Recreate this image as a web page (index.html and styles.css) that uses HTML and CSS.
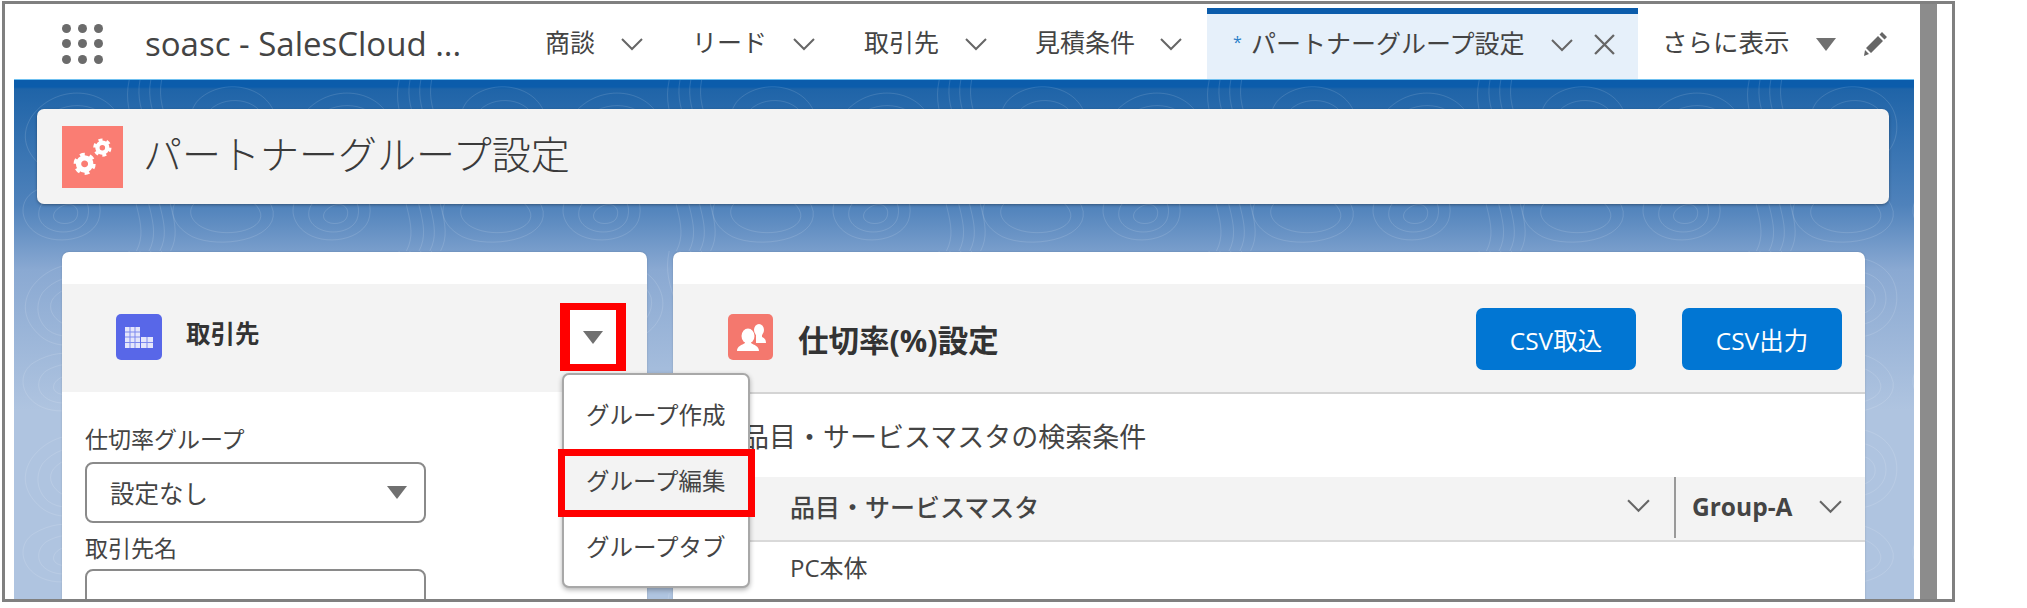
FILE: index.html
```html
<!DOCTYPE html>
<html lang="ja">
<head>
<meta charset="utf-8">
<title>パートナーグループ設定</title>
<link rel="stylesheet" href="styles.css">
</head>
<body>
<div class="frame">
  <div class="app">
    <nav class="nav">
      <div class="launcher">
        <i></i><i></i><i></i><i></i><i></i><i></i><i></i><i></i><i></i>
      </div>
      <div class="appname">soasc - SalesCloud ...</div>
      <div class="tabs">
        <div class="tab t1"><span>商談</span><svg class="chev" viewBox="0 0 22 12"><polyline points="1,1 11,11 21,1"/></svg></div>
        <div class="tab t2"><span>リード</span><svg class="chev" viewBox="0 0 22 12"><polyline points="1,1 11,11 21,1"/></svg></div>
        <div class="tab t3"><span>取引先</span><svg class="chev" viewBox="0 0 22 12"><polyline points="1,1 11,11 21,1"/></svg></div>
        <div class="tab t4"><span>見積条件</span><svg class="chev" viewBox="0 0 22 12"><polyline points="1,1 11,11 21,1"/></svg></div>
        <div class="tab active">
          <span class="star">*</span><span>パートナーグループ設定</span>
          <svg class="chev chev-a" viewBox="0 0 22 12"><polyline points="1,1 11,11 21,1"/></svg>
          <svg class="close" viewBox="0 0 20 20"><path d="M1 1 L19 19 M19 1 L1 19"/></svg>
        </div>
        <div class="tab more"><span>さらに表示</span><span class="tri tri-more"></span>
          <svg class="pencil" viewBox="0 0 24 26"><path d="M18 1 L23 6 L20.5 8.5 L15.5 3.5 Z M14 5 L19 10 L7 22 L2 17 Z M1 19 L5 23 L0 25 Z"/></svg>
        </div>
      </div>
    </nav>
    <main class="page">
      <svg class="topo" aria-hidden="true">
        <defs>
          <pattern id="contours" width="300" height="190" patternUnits="userSpaceOnUse" patternTransform="scale(.9)">
            <g fill="none" stroke="#ffffff" stroke-opacity=".14" stroke-width="1">
              <path d="M20 40 C50 0 110 10 120 50 C130 95 60 120 30 95 C10 78 8 58 20 40Z"/>
              <path d="M32 46 C56 18 100 26 108 52 C114 86 62 106 38 88 C24 76 24 58 32 46Z"/>
              <path d="M44 52 C62 32 92 38 96 56 C100 78 66 90 50 78 C40 70 38 60 44 52Z"/>
              <path d="M56 58 C68 46 82 50 84 60 C86 70 68 76 60 70 C54 66 52 62 56 58Z"/>
              <path d="M128 0 C118 45 152 66 136 102 C124 130 152 160 136 190"/>
              <path d="M140 0 C132 40 166 66 150 102 C138 130 166 160 150 190"/>
              <path d="M152 0 C144 40 178 66 162 102 C150 130 178 160 162 190"/>
              <path d="M164 0 C156 40 190 66 174 102 C162 130 190 160 174 190"/>
              <path d="M205 22 C235 -6 292 8 292 52 C292 96 235 110 208 80 C192 62 192 36 205 22Z"/>
              <path d="M218 33 C238 14 280 22 280 53 C280 82 238 92 220 72 C208 60 208 44 218 33Z"/>
              <path d="M231 44 C244 32 268 37 268 54 C268 70 242 76 233 64 C226 58 225 50 231 44Z"/>
              <path d="M22 124 C58 102 102 116 95 152 C90 178 44 186 22 168 C6 155 6 134 22 124Z"/>
              <path d="M36 133 C62 118 88 128 82 152 C78 170 48 174 34 162 C24 154 26 140 36 133Z"/>
              <path d="M50 142 C62 134 74 140 70 152 C68 160 52 162 46 156 C42 152 44 146 50 142Z"/>
              <path d="M190 124 C218 102 280 110 288 146 C292 178 228 188 198 174 C172 160 170 138 190 124Z"/>
              <path d="M204 134 C224 120 268 126 274 148 C278 168 234 176 210 164 C194 156 192 142 204 134Z"/>
            </g>
          </pattern>
        </defs>
        <rect width="100%" height="100%" fill="url(#contours)"/>
      </svg>

      <header class="titlebar">
        <span class="title-icon">
          <svg viewBox="0 0 62 62">
            <g fill="none" stroke="#fff">
              <g transform="translate(23,38)">
                <circle r="6.2" stroke-width="5.4"/>
                <circle r="9.4" stroke-width="3.6" stroke-dasharray="4.8 5.04"/>
              </g>
              <g transform="translate(41,21.5)">
                <circle r="5" stroke-width="4.4"/>
                <circle r="7.8" stroke-width="3" stroke-dasharray="4 4.17"/>
              </g>
            </g>
          </svg>
        </span>
        <h1 class="title">パートナーグループ設定</h1>
      </header>

      <div class="columns">
        <section class="panel left">
          <div class="panel-head left-head">
            <span class="obj-icon blue">
              <svg viewBox="0 0 46 46">
                <path class="fillw" d="M9 13 H24 V34 H9 Z M25 23 H37 V34 H25 Z"/>
                <path class="cells" d="M14 13 V34 M19 13 V34 M9 18 H24 M9 23 H24 M9 28.500 H24 M31 23 V34 M25 28.500 H37"/>
              </svg>
            </span>
            <h2 class="left-title">取引先</h2>
          </div>
          <div class="form">
            <label class="lbl">仕切率グループ</label>
            <div class="select"><span>設定なし</span><span class="tri"></span></div>
            <label class="lbl lbl2">取引先名</label>
            <div class="input"></div>
          </div>
        </section>

        <section class="panel right">
          <div class="panel-head right-head">
            <span class="obj-icon coral">
              <svg viewBox="0 0 45 46">
                <ellipse class="fillw" cx="31" cy="16" rx="5" ry="6"/>
                <path class="fillw" d="M28 20 H34 V23 C36 24 38 25 38 29 H28 Z"/>
                <ellipse class="fillw" cx="20" cy="22" rx="6.500" ry="7.500"/>
                <path class="fillw" d="M9 37 C9 32 14 31 17 29 V26 H23 V29 C26 31 31 32 31 37 Z"/>
              </svg>
            </span>
            <h2 class="right-title">仕切率(%)設定</h2>
            <div class="btns">
              <button class="btn">CSV取込</button>
              <button class="btn">CSV出力</button>
            </div>
          </div>
          <p class="criteria">品目・サービスマスタの検索条件</p>
          <div class="thead">
            <div class="th th-main"><span>品目・サービスマスタ</span><svg class="chev chev-th" viewBox="0 0 22 12"><polyline points="1,1 11,11 21,1"/></svg></div>
            <div class="th th-group"><span>Group-A</span><svg class="chev chev-th" viewBox="0 0 22 12"><polyline points="1,1 11,11 21,1"/></svg></div>
          </div>
          <div class="trow">PC本体</div>
        </section>
      </div>

      <div class="mark mark-btn"><span class="tri"></span></div>
      <div class="menu">
        <div class="menu-item">グループ作成</div>
        <div class="menu-item hl">グループ編集</div>
        <div class="menu-item">グループタブ</div>
      </div>
      <div class="mark mark-item"></div>
    </main>
  </div>
  <div class="gutter"></div>
  <div class="scrollbar"></div>
</div>
</body>
</html>
```
FILE: styles.css
```css
* { box-sizing: border-box; }
html, body { margin: 0; padding: 0; background: #fff; }
body {
  font-family: "Open Sans", "Noto Sans CJK JP", sans-serif;
  color: #444;
  height: 608px;
  overflow: hidden;
}
h1, h2, p { margin: 0; font-weight: 400; }

.frame {
  margin: 1px 0 0 2px;
  width: 1953px;
  height: 601px;
  border: 3px solid #808080;
  display: flex;
  overflow: hidden;
  background: #fff;
}
.app {
  margin-left: 9px;
  width: 1900px;
  flex: none;
  display: flex;
  flex-direction: column;
}
.gutter { width: 6px; flex: none; }
.scrollbar { width: 17px; flex: none; background: #8c8c8c; }

/* nav */
.nav {
  height: 75px;
  flex: none;
  background: #fff;
  display: flex;
  align-items: center;
  padding-left: 48px;
}
.launcher {
  width: 41px;
  height: 40px;
  display: grid;
  grid-template-columns: repeat(3, 9px);
  grid-auto-rows: 9px;
  justify-content: space-between;
  align-content: space-between;
  flex: none;
  margin-top: 4px;
}
.launcher i { background: #6b6b6b; border-radius: 50%; }
.appname {
  margin-left: 42px;
  font-size: 33px;
  width: 320px;
  flex: none;
  white-space: nowrap;
  color: #444;
  margin-top: 4px;
}
.tabs { display: flex; align-items: stretch; height: 100%; margin-left: 56px; }
.tab {
  display: flex;
  align-items: center;
  font-size: 25px;
  white-space: nowrap;
  padding: 0 0 0 24px;
  flex: none;
  color: #444;
}
.tab > span { line-height: 1; margin-top: 2px; }
.tab .chev { margin-top: 4px; }
.t1 { width: 147px; }
.t2 { width: 172px; }
.t3 { width: 171px; }
.t4 { width: 196px; }
.t1 .chev { margin-left: 26px; }
.t2 .chev { margin-left: 26px; }
.t3 .chev { margin-left: 26px; }
.t4 .chev { margin-left: 25px; }
.chev { width: 22px; height: 12px; flex: none; overflow: visible; }
.chev polyline { fill: none; stroke: #666; stroke-width: 2; }
.active {
  width: 431px;
  padding: 0 0 8px 26px;
  background: #e6f0fa;
  border-top: 6px solid #0b5cab;
  margin-top: 4px;
}
.tab .star { color: #2a7fc9; font-size: 16px; margin-right: 7px; width: 11px; margin-top: -2px; }
.tab .chev-a { margin-left: 26px; }
.close { width: 21px; height: 21px; margin-left: 21px; flex: none; margin-top: 4px; }
.close path { stroke: #666; stroke-width: 2.2; fill: none; }
.more { padding: 0 0 0 24px; font-size: 25.5px; }
.tri {
  width: 0;
  height: 0;
  flex: none;
  border-left: 10px solid transparent;
  border-right: 10px solid transparent;
  border-top: 13px solid #707070;
  display: block;
}
.tab .tri-more { margin-left: 26px; margin-top: 6px; }
.pencil { width: 24px; height: 26px; margin-left: 28px; flex: none; fill: #666; margin-top: 4px; }

/* page */
.page {
  position: relative;
  flex: 1;
  min-height: 0;
  padding: 29px 25px 0 23px;
  background: linear-gradient(#0b5cab 0, #0b5cab 7px, #1f64a8 9px, #4f82bb 125px, #8aa9d2 190px, #afc4e0 330px);
  border-top: 1px solid #6fc0f0;
  overflow: hidden;
}
.topo { position: absolute; inset: 0; width: 100%; height: 100%; }

.titlebar {
  position: relative;
  height: 95px;
  background: #f3f3f3;
  border-radius: 7px;
  box-shadow: 0 1px 3px rgba(0, 0, 0, .35);
  display: flex;
  align-items: center;
  padding-left: 25px;
}
.title-icon { width: 61px; height: 62px; background: #fa7d73; flex: none; display: block; }
.title-icon svg { display: block; width: 100%; height: 100%; }
.title {
  margin-left: 20px;
  font-size: 39px;
  font-weight: 300;
  color: #3a3a3a;
  line-height: 1;
  margin-top: -6px;
}

.columns {
  position: relative;
  display: flex;
  gap: 26px;
  margin: 48px 24px 0 25px;
  height: 400px;
}
.panel {
  background: #fff;
  border-radius: 7px 7px 0 0;
  padding-top: 32px;
  flex: none;
  box-shadow: 0 0 2px rgba(0, 0, 0, .2);
}
.left { width: 585px; }
.right { width: 1192px; }
.panel-head {
  height: 108px;
  background: #f3f3f3;
  display: flex;
  align-items: center;
}
.obj-icon { width: 46px; height: 46px; border-radius: 5px; flex: none; display: block; margin-top: -3px; }
.obj-icon svg { display: block; width: 100%; height: 100%; }
.blue { background: #5867e8; }
.coral { background: #f4786e; width: 45px; }
.fillw { fill: #fff; }
.blue .fillw { fill: #e4e6fb; }
.cells { stroke: #7d89ee; stroke-width: 1; fill: none; }
.left-head { padding-left: 54px; }
.left-title { font-size: 24.5px; font-weight: 700; margin-left: 24px; margin-top: -8px; color: #333; line-height: 1; }
.right-head { height: 110px; padding-left: 55px; border-bottom: 2px solid #d4d4d4; }
.right-title { font-size: 30.5px; font-weight: 700; margin-left: 25px; color: #333; line-height: 1; margin-top: 4px; }
.btns { margin-left: auto; display: flex; gap: 46px; padding-right: 23px; margin-top: 2px; }
.btn {
  width: 160px;
  height: 62px;
  background: #0176d3;
  color: #fff;
  border: 0;
  border-radius: 7px;
  font: 400 24.5px "Open Sans", "Noto Sans CJK JP", sans-serif;
  padding: 0;
}
.criteria {
  font-size: 27px;
  line-height: 1;
  padding: 29px 0 0 69px;
  height: 83px;
  color: #444;
}
.thead {
  height: 65px;
  background: #f3f3f3;
  border-bottom: 2px solid #d9d9d9;
  display: flex;
}
.th { display: flex; align-items: center; font-size: 25px; font-weight: 500; height: 61px; padding-bottom: 4px; }
.th-main { width: 1003px; padding-left: 117px; justify-content: space-between; padding-right: 24px; border-right: 2px solid #999; flex: none; }
.th-group { padding-left: 16px; font-weight: 700; font-size: 24.5px; padding-bottom: 3px; }
.chev-th { width: 23px; height: 13px; }
.th-group .chev-th { margin-left: 27px; }
.trow { font-size: 24px; padding: 10px 0 0 117px; line-height: 32px; }

.form { padding: 32px 24px 0 23px; }
.lbl { display: block; font-size: 23px; line-height: 30px; color: #444; }
.lbl2 { margin-top: 10px; }
.select {
  width: 341px;
  height: 61px;
  margin-top: 8px;
  border: 2px solid #8a8a8a;
  border-radius: 8px;
  display: flex;
  align-items: center;
  justify-content: space-between;
  padding: 0 17px 0 23px;
  font-size: 24.5px;
}
.input {
  width: 341px;
  height: 60px;
  margin-top: 6px;
  border: 2px solid #8a8a8a;
  border-radius: 8px;
}

/* overlays: dropdown and red annotation frames */
.menu {
  position: absolute;
  left: 548px;
  top: 293px;
  width: 188px;
  height: 215px;
  background: #fff;
  border: 2px solid #a8a8a8;
  border-radius: 7px;
  box-shadow: 0 2px 5px rgba(0, 0, 0, .3);
  padding-top: 10px;
}
.menu-item { height: 66px; font-size: 23.5px; line-height: 60px; padding-left: 22px; white-space: nowrap; color: #444; }
.hl { background: #f3f3f3; }
.mark { position: absolute; border-style: solid; border-color: #f00; }
.mark-btn {
  left: 546px;
  top: 223px;
  width: 66px;
  height: 68px;
  background: #fff;
  border-width: 7px 10px;
  display: flex;
  align-items: center;
  justify-content: center;
}
.mark-item {
  left: 544px;
  top: 369px;
  width: 197px;
  height: 68px;
  border-width: 7px;
}
```
